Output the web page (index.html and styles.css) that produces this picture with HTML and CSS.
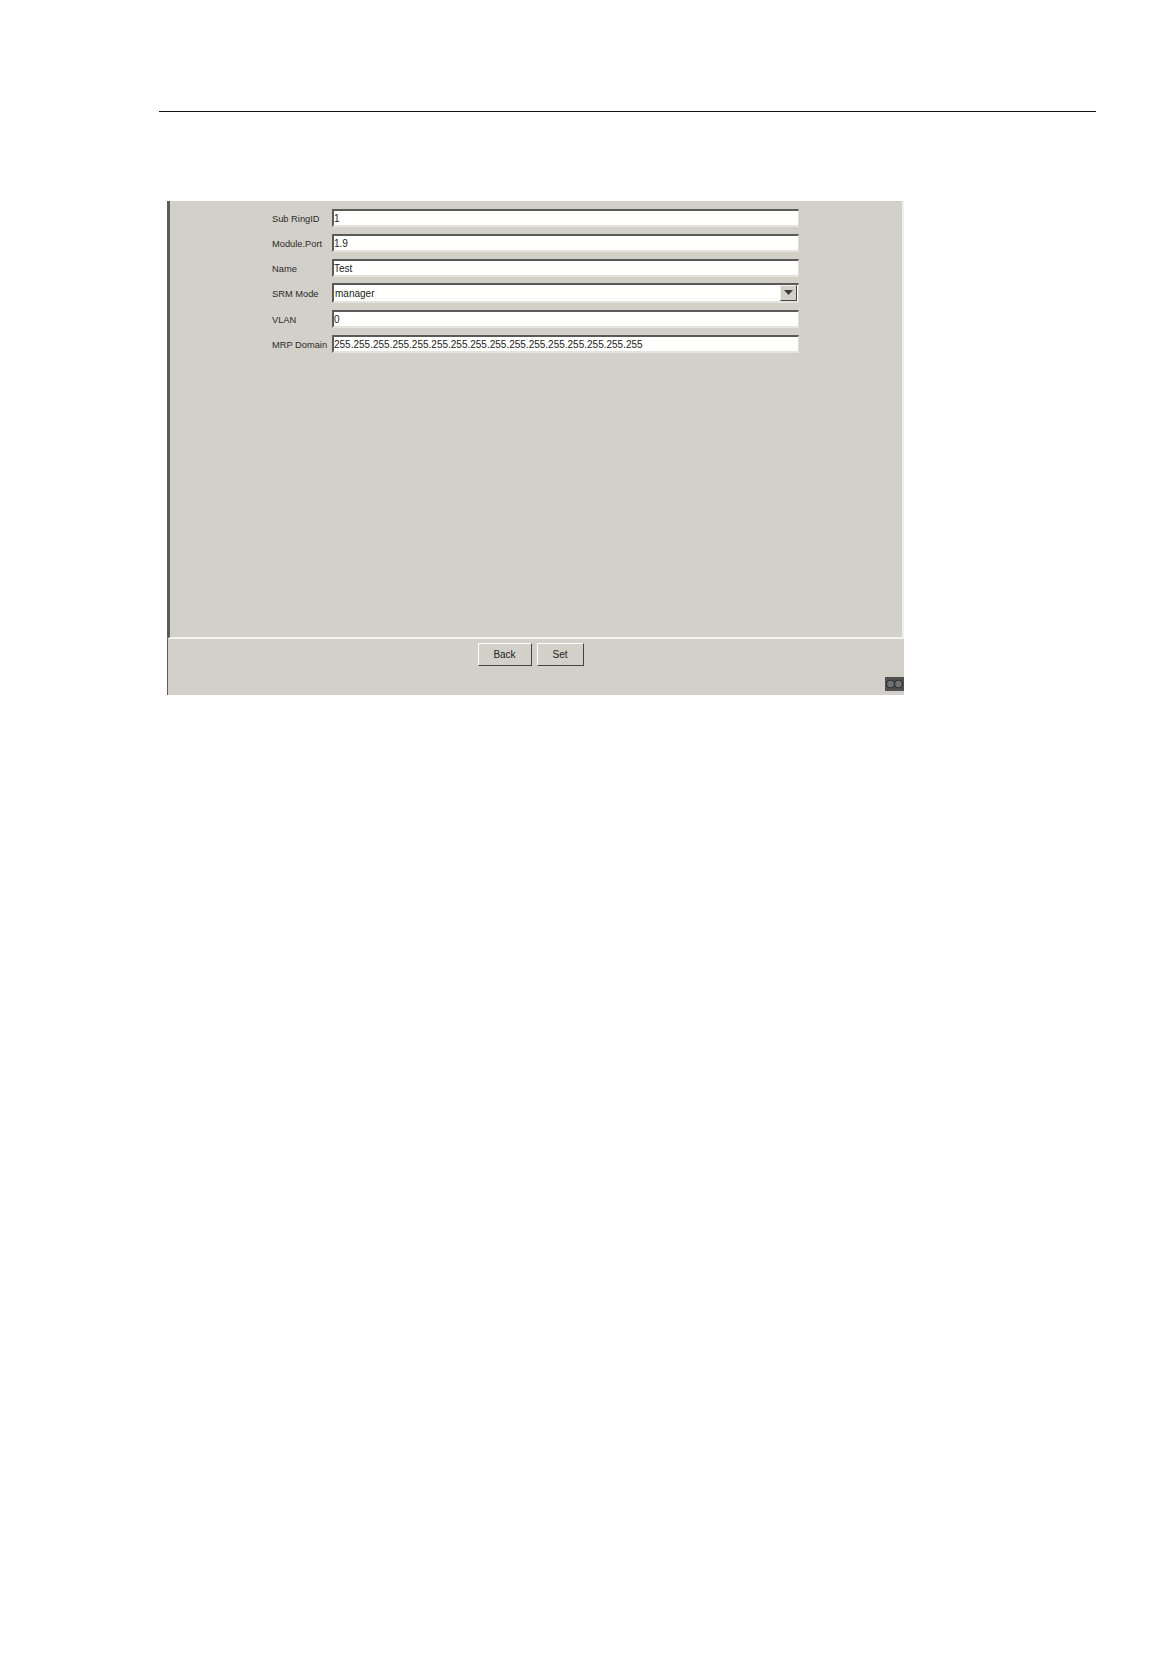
FILE: index.html
```html
<html>
	<head>
		<title>Sub Ring</title>
		<link rel="stylesheet" href="styles.css">
	</head>
	<body>
		<div class="hr"></div>
		<div id="panel">
			<div id="form">
				<div class="row">
					<span class="label">Sub RingID</span>
					<div class="field">1</div>
				</div>
				<div class="row">
					<span class="label">Module.Port</span>
					<div class="field">1.9</div>
				</div>
				<div class="row">
					<span class="label">Name</span>
					<div class="field">Test</div>
				</div>
				<div class="row tall">
					<span class="label">SRM Mode</span>
					<div class="field select">
						<span>manager</span>
						<div class="arrow">
							<svg width="10" height="6" viewBox="0 0 10 6"><path d="M0 0H9L4.5 5Z" fill="#3c3c3c"/></svg>
						</div>
					</div>
				</div>
				<div class="row">
					<span class="label">VLAN</span>
					<div class="field">0</div>
				</div>
				<div class="row">
					<span class="label">MRP Domain</span>
					<div class="field">255.255.255.255.255.255.255.255.255.255.255.255.255.255.255.255</div>
				</div>
			</div>
			<div id="footer">
				<div class="buttons">
					<button type="button" class="back">Back</button>
					<button type="button" class="set">Set</button>
				</div>
				<div class="status">
					<svg width="19" height="14" viewBox="0 0 19 14">
						<rect width="19" height="14" fill="#505052"/>
						<circle cx="5.5" cy="7" r="4" fill="#6f7272" stroke="#2a2a2c"/>
						<circle cx="13.5" cy="7" r="4" fill="#6f7272" stroke="#2a2a2c"/>
					</svg>
				</div>
			</div>
		</div>
	</body>
</html>
```

FILE: styles.css
```css
body {
	margin: 0;
	background: #fff;
	font-family: "Liberation Sans", Arial, sans-serif;
	font-size: 10px;
	color: #1c1c1c;
}

div.hr {
	border-top: 1px solid #111;
	margin: 111px 78px 0 159px;
}

#panel {
	width: 737px;
	height: 494px;
	margin: 89px 0 0 167px;
	display: flex;
	flex-direction: column;
	background: #d3d0c9;
}

#form {
	flex: 1;
	display: flex;
	flex-direction: column;
	gap: 7px;
	padding: 8px 0 0 102px;
	border-left: 3px solid #5c5c56;
	border-right: 2px solid #efefeb;
	border-bottom: 2px solid #f4f3ef;
}

.row {
	display: flex;
	align-items: center;
	height: 18px;
}

.row.tall {
	margin-bottom: 1px;
}

.label {
	width: 60px;
	padding-top: 1px;
	font-size: 9.3px;
	color: #2a2a2a;
}

.field {
	box-sizing: border-box;
	width: 467px;
	height: 18px;
	line-height: 15px;
	padding-left: 0;
	background: #fffffd;
	border-top: 2px solid #5a5a58;
	border-left: 2px solid #5a5a58;
	border-right: 1px solid #dedcd6;
	border-bottom: 2px solid #e4e2dc;
}

.select {
	height: 20px;
	line-height: 17px;
	padding-left: 1px;
	display: flex;
	justify-content: space-between;
}

.arrow {
	box-sizing: border-box;
	width: 17px;
	height: 16px;
	margin: 0 1px 0 0;
	display: flex;
	align-items: center;
	justify-content: center;
	background: #d3d0c9;
	border: 1px solid;
	border-color: #f2f1ec #444 #444 #f2f1ec;
}

#footer {
	height: 56px;
	position: relative;
	border-left: 1px solid #5c5c56;
}

.buttons {
	display: flex;
	gap: 5px;
	padding: 4px 0 0 310px;
}

button {
	box-sizing: border-box;
	height: 23px;
	padding: 0 1px 0 0;
	font-family: "Liberation Sans", Arial, sans-serif;
	font-size: 10px;
	color: #1c1c1c;
	background: #d3d0c9;
	border: 1px solid;
	border-color: #fbfbf8 #444 #444 #fbfbf8;
}

.back {
	width: 54px;
}

.set {
	width: 47px;
}

.status {
	position: absolute;
	right: 0;
	bottom: 4px;
	height: 14px;
}
```
